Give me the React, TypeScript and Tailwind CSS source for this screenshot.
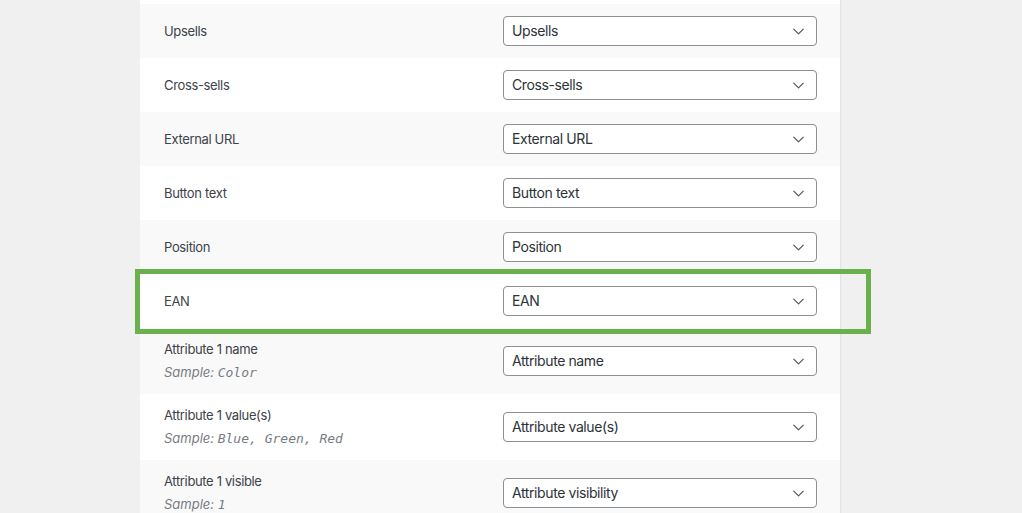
import { ChevronDown } from "lucide-react"

type Row = {
  label: string
  value: string
  sample?: string
}

const rows: Row[] = [
  { label: "Upsells", value: "Upsells" },
  { label: "Cross-sells", value: "Cross-sells" },
  { label: "External URL", value: "External URL" },
  { label: "Button text", value: "Button text" },
  { label: "Position", value: "Position" },
  { label: "EAN", value: "EAN" },
  { label: "Attribute 1 name", value: "Attribute name", sample: "Color" },
  { label: "Attribute 1 value(s)", value: "Attribute value(s)", sample: "Blue, Green, Red" },
  { label: "Attribute 1 visible", value: "Attribute visibility", sample: "1" },
]

function MapSelect({ value }: { value: string }) {
  return (
    <div className="flex h-[30px] w-[314px] items-center justify-between rounded-[4px] border border-[#8c8f94] bg-white pl-2 pr-2 text-[14px] tracking-[-0.4px] text-[#2c3338]">
      <span className="-mt-px">{value}</span>
      <ChevronDown size={19} strokeWidth={1.5} className="text-[#50575e]" />
    </div>
  )
}

export default function App() {
  return (
    <div className="relative h-[513px] w-[1022px] overflow-hidden bg-[#f0f0f1] font-['Inter','Liberation_Sans',sans-serif]">
      <div className="ml-[140px] w-[700px] bg-white pt-1 shadow-[1px_0_1px_rgba(0,0,0,0.05)]">
        {rows.map((row, i) => (
          <div
            key={row.label}
            className={`flex items-center pl-6 ${row.sample ? "h-[66px]" : "h-[54px]"} ${i % 2 === 0 ? "bg-[#f9f9f9]" : "bg-white"}`}
          >
            <div className="-mt-px flex w-[339px] flex-col">
              <span className="text-[13px] leading-5 tracking-[-0.35px] text-[#3c434a]">{row.label}</span>
              {row.sample && (
                <span className="mt-[3px] text-[13px] leading-5 text-[#787c82] italic">
                  Sample:{" "}
                  <code className="font-['DejaVu_Sans_Mono','Liberation_Mono',monospace] text-[13px] italic">
                    {row.sample}
                  </code>
                </span>
              )}
            </div>
            <MapSelect value={row.value} />
          </div>
        ))}
      </div>

      {/* highlight around the EAN mapping */}
      <div className="absolute left-[135px] top-[269px] h-[65px] w-[736px] border-[5px] border-[#6ab04c]" />
    </div>
  )
}
